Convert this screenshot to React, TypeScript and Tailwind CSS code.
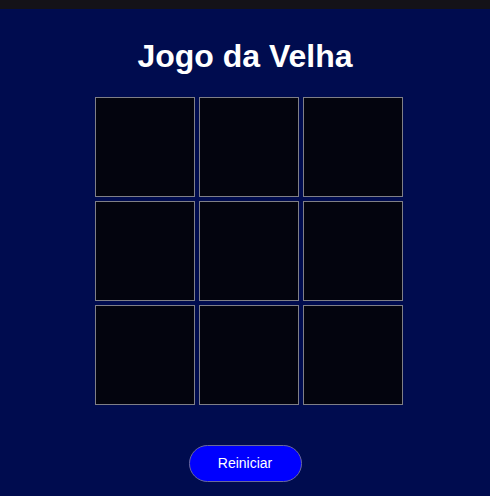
export default function App() {
  const cells = Array.from({ length: 9 }, (_, i) => i);

  return (
    <div className="min-h-screen bg-[#000c4f] font-['Liberation_Sans',Arial,sans-serif]">
      <div className="h-[9px] bg-[#141218]" />
      <h1 className="mt-[29px] text-center text-[32px] font-bold leading-[37px] text-white">
        Jogo da Velha
      </h1>
      <div className="mt-[22px] flex justify-center pl-2">
        <div className="grid grid-cols-[repeat(3,100px)] gap-1">
          {cells.map((c) => (
            <div
              key={c}
              className="h-[100px] w-[100px] border border-[#7f7f86] bg-[#03040e]"
            />
          ))}
        </div>
      </div>
      <div className="mt-10 flex justify-center">
        <button className="h-[37px] w-[113px] rounded-full border border-[#6a6a9a] bg-[#0000ff] text-[14px] text-white">
          Reiniciar
        </button>
      </div>
    </div>
  );
}
